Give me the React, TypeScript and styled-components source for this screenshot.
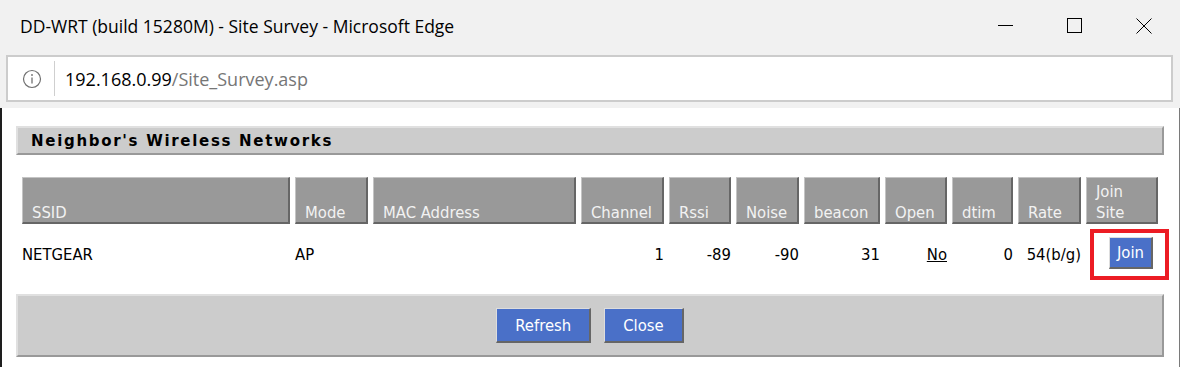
import React from 'react';
import styled, { createGlobalStyle } from 'styled-components';

const GlobalStyle = createGlobalStyle`
  html, body {
    margin: 0;
    padding: 0;
    background: #fff;
  }
  body {
    width: 1180px;
    height: 367px;
    overflow: hidden;
  }
`;

const uiFont = `"Open Sans", "Noto Sans", sans-serif`;
const pageFont = `"DejaVu Sans Condensed", "DejaVu Sans", sans-serif`;

const Window = styled.div`
  width: 1180px;
  height: 367px;
  display: flex;
  flex-direction: column;
  background: #f1f1f1;
  overflow: hidden;
`;

const TitleBar = styled.div`
  height: 52px;
  flex-shrink: 0;
  display: flex;
  align-items: center;
`;

const Title = styled.div`
  flex: 1;
  padding-left: 20px;
  font-family: ${uiFont};
  font-size: 17.5px;
  color: #000;
`;

const Controls = styled.div`
  display: flex;
  height: 100%;
  padding-right: 2px;
`;

const CaptionButton = styled.div`
  width: 69px;
  height: 100%;
  display: flex;
  align-items: center;
  justify-content: center;
`;

const AddressBar = styled.div`
  margin: 3px 0 6px 6px;
  width: 1167px;
  height: 47px;
  box-sizing: border-box;
  border: 2px solid #cccccc;
  background: #fff;
  display: flex;
  align-items: center;
  flex-shrink: 0;
`;

const InfoIcon = styled.svg`
  margin-left: 14px;
  flex-shrink: 0;
`;

const Divider = styled.div`
  width: 1px;
  height: 35px;
  background: #cfcfcf;
  margin-left: 12px;
`;

const Url = styled.div`
  margin-left: 10px;
  font-family: ${uiFont};
  font-size: 18px;
  color: #000;
`;

const UrlPath = styled.span`
  color: #767676;
`;

const Content = styled.div`
  flex: 1;
  background: #fff;
  border-left: 2px solid #1e1e1e;
  border-right: 1px solid #7a7a7a;
  padding: 18px 14px 0 14px;
`;

const SectionBar = styled.div`
  width: 1148px;
  height: 29px;
  box-sizing: border-box;
  background: #cccccc;
  border-style: solid;
  border-width: 2px;
  border-color: #e0e0e0 #999999 #999999 #e0e0e0;
  padding-left: 13px;
  display: flex;
  align-items: center;
  font-family: "DejaVu Sans", sans-serif;
  font-weight: bold;
  font-size: 15px;
  letter-spacing: 1.7px;
  color: #000;
`;

const Table = styled.div`
  margin: 22px 0 0 6px;
  display: grid;
  grid-template-columns: 268px 73px 203px 83px 62px 63px 76px 62px 61px 63px 72px;
  column-gap: 5px;
  row-gap: 5px;
`;

const HeaderCell = styled.div`
  height: 47px;
  box-sizing: border-box;
  background: #999999;
  border-style: solid;
  border-width: 1px 2px 2px 1px;
  border-color: #c4c4c4 #666666 #666666 #c4c4c4;
  padding-left: 9px;
  display: flex;
  flex-direction: column;
  justify-content: flex-end;
  font-family: ${pageFont};
  font-stretch: condensed;
  font-size: 16.5px;
  line-height: 21px;
  color: #f2f2f2;
  white-space: nowrap;
`;

const HeaderLabel = styled.div`
  margin-bottom: -1px;
`;

const DataCell = styled.div<{ $align?: 'left' | 'right' }>`
  position: relative;
  height: 50px;
  display: flex;
  align-items: center;
  justify-content: ${(p) => (p.$align === 'right' ? 'flex-end' : 'flex-start')};
  font-family: ${pageFont};
  font-stretch: condensed;
  font-size: 16.5px;
  color: #000;
  white-space: nowrap;
`;

const JoinCell = styled(DataCell)`
  padding-right: 5px;
`;

const Link = styled.span`
  text-decoration: underline;
  color: #000;
`;

const Button = styled.button<{ $large?: boolean }>`
  height: ${(p) => (p.$large ? '35px' : '32px')};
  padding: ${(p) => (p.$large ? '0 18px' : '0 7px')};
  margin-bottom: ${(p) => (p.$large ? '0' : '3px')};
  box-sizing: border-box;
  background: #4a70c8;
  color: #fff;
  border-style: solid;
  border-width: 1px 2px 2px 1px;
  border-color: #dddddd #666666 #666666 #dddddd;
  font-family: ${pageFont};
  font-stretch: condensed;
  font-size: 16.5px;
  cursor: pointer;
`;

const Highlight = styled.div`
  position: absolute;
  left: 4px;
  top: 0;
  width: 79px;
  height: 51px;
  box-sizing: border-box;
  border: 4px solid #ec1c24;
  pointer-events: none;
`;

const Footer = styled.div`
  margin-top: 15px;
  width: 1148px;
  height: 63px;
  box-sizing: border-box;
  background: #cccccc;
  border-style: solid;
  border-width: 2px;
  border-color: #e0e0e0 #999999 #999999 #e0e0e0;
  display: flex;
  align-items: center;
  justify-content: center;
  gap: 13px;
`;

const columns: { label: React.ReactNode }[] = [
  { label: 'SSID' },
  { label: 'Mode' },
  { label: 'MAC Address' },
  { label: 'Channel' },
  { label: 'Rssi' },
  { label: 'Noise' },
  { label: 'beacon' },
  { label: 'Open' },
  { label: 'dtim' },
  { label: 'Rate' },
  { label: <>Join<br />Site</> },
];

export default function App() {
  return (
    <>
      <GlobalStyle />
      <Window>
        <TitleBar>
          <Title>DD-WRT (build 15280M) - Site Survey - Microsoft Edge</Title>
          <Controls>
            <CaptionButton>
              <svg width="16" height="16" viewBox="0 0 16 16">
                <line x1="0" y1="7.5" x2="15" y2="7.5" stroke="#000" strokeWidth="1" />
              </svg>
            </CaptionButton>
            <CaptionButton>
              <svg width="16" height="16" viewBox="0 0 16 16">
                <rect x="0.5" y="0.5" width="14" height="14" fill="none" stroke="#000" strokeWidth="1" />
              </svg>
            </CaptionButton>
            <CaptionButton>
              <svg width="16" height="16" viewBox="0 0 16 16">
                <path d="M0.5 0.5 L15.5 15.5 M15.5 0.5 L0.5 15.5" stroke="#000" strokeWidth="1" />
              </svg>
            </CaptionButton>
          </Controls>
        </TitleBar>

        <AddressBar>
          <InfoIcon width="20" height="20" viewBox="0 0 20 20">
            <circle cx="10" cy="10" r="8.5" fill="none" stroke="#707070" strokeWidth="1.2" />
            <rect x="9.35" y="8.5" width="1.3" height="6" fill="#707070" />
            <circle cx="10" cy="6" r="0.9" fill="#707070" />
          </InfoIcon>
          <Divider />
          <Url>
            192.168.0.99<UrlPath>/Site_Survey.asp</UrlPath>
          </Url>
        </AddressBar>

        <Content>
          <SectionBar>Neighbor's Wireless Networks</SectionBar>

          <Table>
            {columns.map((c, i) => (
              <HeaderCell key={i}>
                <HeaderLabel>{c.label}</HeaderLabel>
              </HeaderCell>
            ))}

            <DataCell>NETGEAR</DataCell>
            <DataCell>AP</DataCell>
            <DataCell></DataCell>
            <DataCell $align="right">1</DataCell>
            <DataCell $align="right">-89</DataCell>
            <DataCell $align="right">-90</DataCell>
            <DataCell $align="right">31</DataCell>
            <DataCell $align="right"><Link>No</Link></DataCell>
            <DataCell $align="right">0</DataCell>
            <DataCell $align="right">54(b/g)</DataCell>
            <JoinCell $align="right">
              <Button>Join</Button>
              <Highlight />
            </JoinCell>
          </Table>

          <Footer>
            <Button $large>Refresh</Button>
            <Button $large>Close</Button>
          </Footer>
        </Content>
      </Window>
    </>
  );
}
